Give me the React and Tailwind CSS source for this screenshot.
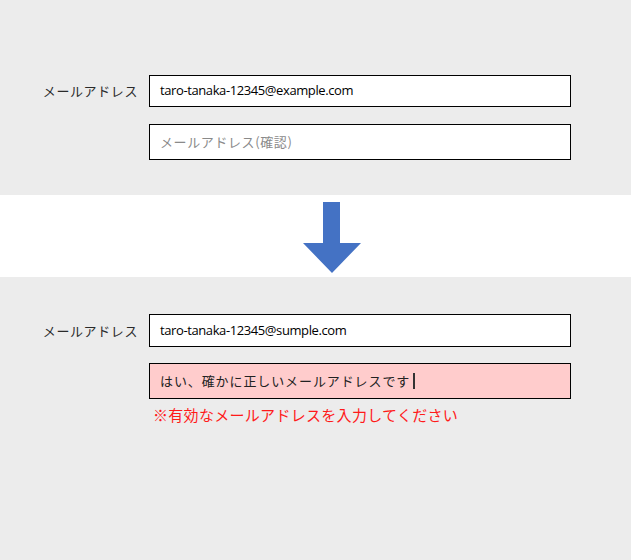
export default function App() {
  const jp = { fontFamily: '"Noto Sans CJK JP", "Noto Sans", sans-serif' };
  const latin = { fontFamily: '"Open Sans", "Noto Sans CJK JP", sans-serif' };

  return (
    <div className="w-[631px] h-[560px] flex flex-col bg-[#ececec]" style={jp}>
      {/* before: entry form */}
      <section className="h-[195px] pt-[75px] flex flex-col gap-[17px]">
        <div className="flex items-center">
          <div className="w-[149px] pr-[11px] text-right text-[13px] tracking-[0.6px] text-[#2a2a2a]">
            メールアドレス
          </div>
          <div className="w-[422px] h-[32px] border border-black bg-white flex items-center pl-[10px] text-[13px] tracking-[-0.4px] text-black" style={latin}>
            taro-tanaka-12345@example.com
          </div>
        </div>
        <div className="flex items-center pl-[149px]">
          <div className="w-[422px] h-[36px] border border-black bg-white flex items-center pl-[10px] text-[13px] tracking-[0.6px] text-[#8a8a8a]">
            メールアドレス(確認)
          </div>
        </div>
      </section>

      {/* transition band with arrow */}
      <div className="h-[82px] bg-white pl-[303px] pt-[7px]">
        <svg width="58" height="71" viewBox="0 0 58 71">
          <path d="M20 0 H37 V41 H58 L29 71 L0 41 H20 Z" fill="#4472c4" />
        </svg>
      </div>

      {/* after: validation result */}
      <section className="flex-1 pt-[37px] flex flex-col">
        <div className="flex items-center">
          <div className="w-[149px] pr-[11px] text-right text-[13px] tracking-[0.6px] text-[#2a2a2a]">
            メールアドレス
          </div>
          <div className="w-[422px] h-[33px] border border-black bg-white flex items-center pl-[10px] text-[13px] tracking-[-0.4px] text-black" style={latin}>
            taro-tanaka-12345@sumple.com
          </div>
        </div>
        <div className="flex items-center pl-[149px] mt-[16px]">
          <div className="w-[422px] h-[36px] border border-black bg-[#ffcccc] flex items-center pl-[10px] text-[13px] tracking-[0.9px] text-[#222]">
            はい、確かに正しいメールアドレスです
            <span className="ml-[3px] w-[1.5px] h-[16px] bg-[#333]" />
          </div>
        </div>
        <div className="pl-[153px] mt-[6px] text-[15px] tracking-[0.3px] text-[#ff1a1a] leading-[20px]">
          ※有効なメールアドレスを入力してください
        </div>
      </section>
    </div>
  );
}
